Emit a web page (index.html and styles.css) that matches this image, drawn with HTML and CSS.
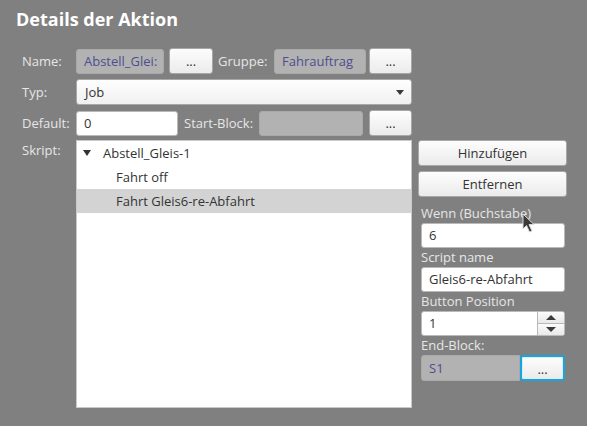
FILE: index.html
```html
<!DOCTYPE html>
<html lang="de">
<head>
<meta charset="utf-8">
<title>Details der Aktion</title>
<link rel="stylesheet" href="styles.css">
</head>
<body>
<div class="panel">
  <h1 class="title">Details der Aktion</h1>
  <div class="form">
    <div class="row">
      <span class="lbl lbl-main">Name:</span>
      <div class="field ro w88">Abstell_Glei:</div>
      <button class="btn w44 ml5">...</button>
      <span class="lbl lbl-grp">Gruppe:</span>
      <div class="field ro w92">Fahrauftrag</div>
      <button class="btn w43 ml3">...</button>
    </div>
    <div class="row">
      <span class="lbl lbl-main">Typ:</span>
      <div class="combo"><span>Job</span><span class="caret"></span></div>
    </div>
    <div class="row">
      <span class="lbl lbl-main">Default:</span>
      <div class="field w102">0</div>
      <span class="lbl lbl-start">Start-Block:</span>
      <div class="field ro w104"></div>
      <button class="btn w43 ml6">...</button>
    </div>
    <div class="main">
      <span class="lbl lbl-main">Skript:</span>
      <div class="tree">
        <div class="node root"><span class="tri"></span>Abstell_Gleis-1</div>
        <div class="node child">Fahrt off</div>
        <div class="node child sel">Fahrt Gleis6-re-Abfahrt</div>
      </div>
      <div class="side">
        <button class="btn wide">Hinzufügen</button>
        <button class="btn wide">Entfernen</button>
        <span class="lbl side-lbl first">Wenn (Buchstabe)</span>
        <div class="field sfield">6</div>
        <span class="lbl side-lbl">Script name</span>
        <div class="field sfield">Gleis6-re-Abfahrt</div>
        <span class="lbl side-lbl">Button Position</span>
        <div class="spinner">
          <span class="spin-val">1</span>
          <div class="spin-btns">
            <span class="spin-up"><i class="up"></i></span>
            <span class="spin-dn"><i class="dn"></i></span>
          </div>
        </div>
        <span class="lbl side-lbl">End-Block:</span>
        <div class="endrow">
          <div class="field ro w99">S1</div>
          <button class="btn focus w45">...</button>
        </div>
      </div>
    </div>
  </div>
  <svg class="cursor" width="14" height="21" viewBox="0 0 14 21">
    <path d="M1 1 L1 16 L4.5 12.5 L7.5 19 L10 18 L7 11.5 L12 11.5 Z" fill="#3a3a3a" stroke="#d8d8d8" stroke-width="1" stroke-linejoin="round"/>
  </svg>
</div>
</body>
</html>
```
FILE: styles.css
```css
body {
  margin: 0;
  background: #ffffff;
  font-family: "Open Sans", "DejaVu Sans", sans-serif;
  font-size: 13px;
}

.panel {
  width: 587px;
  height: 426px;
  background: #808080;
  position: relative;
  overflow: hidden;
}

.title {
  margin: 0;
  padding: 7px 0 0 16px;
  font-size: 18px;
  line-height: 24px;
  font-weight: 700;
  color: #ffffff;
}

.form {
  padding: 17px 0 0 22px;
  display: flex;
  flex-direction: column;
  gap: 5px;
}

.row {
  display: flex;
  align-items: center;
  height: 26px;
}

.lbl {
  color: #e6e6e6;
  line-height: 19px;
  white-space: nowrap;
}

.lbl-main { width: 54px; flex: none; }
.lbl-grp { width: 56px; margin-left: 5px; flex: none; }
.lbl-start { width: 75px; margin-left: 6px; flex: none; }

.field {
  box-sizing: border-box;
  height: 25px;
  line-height: 23px;
  padding: 0 7px;
  background: #ffffff;
  border: 1px solid #b9b9b9;
  border-radius: 3px;
  color: #333333;
  white-space: nowrap;
  overflow: hidden;
  flex: none;
}

.field.ro {
  background: #b2b2b2;
  border-color: #a9a9a9;
  color: #4e4e8e;
}

.w88 { width: 88px; }
.w92 { width: 92px; }
.w102 { width: 102px; }
.w104 { width: 104px; }
.w99 { width: 99px; }
.w44 { width: 44px; }
.w43 { width: 43px; }
.w45 { width: 45px; }
.ml3 { margin-left: 3px; }
.ml5 { margin-left: 5px; }
.ml6 { margin-left: 6px; }

.btn {
  box-sizing: border-box;
  height: 26px;
  padding: 0;
  font-family: inherit;
  font-size: 13px;
  color: #333333;
  background: linear-gradient(#fdfdfd, #ebebeb);
  border: 1px solid #a8a8a8;
  border-radius: 3px;
  flex: none;
  line-height: 24px;
}

.btn.focus {
  border: 2px solid #1aa3dc;
  box-shadow: inset 0 0 0 1px #d6eef8;
}

.combo {
  box-sizing: border-box;
  width: 336px;
  height: 26px;
  display: flex;
  align-items: center;
  justify-content: space-between;
  padding: 0 8px 0 8px;
  background: linear-gradient(#fefefe, #f0f0f0);
  border: 1px solid #a8a8a8;
  border-radius: 3px;
  color: #333333;
}

.caret {
  width: 0;
  height: 0;
  border-left: 4.5px solid transparent;
  border-right: 4.5px solid transparent;
  border-top: 5px solid #3a3a3a;
  margin-right: -1px;
}

.main {
  display: flex;
  align-items: flex-start;
  margin-top: -1px;
}

.main .lbl-main { margin-top: 1px; }

.tree {
  box-sizing: border-box;
  width: 336px;
  height: 268px;
  background: #ffffff;
  border: 1px solid #c9c9c9;
  flex: none;
}

.node {
  height: 24px;
  line-height: 24px;
  color: #333333;
  white-space: nowrap;
  display: flex;
  align-items: center;
}

.node.root { padding-left: 6px; }
.node.child { padding-left: 39px; }
.node.sel { background: #d3d3d3; }

.tri {
  width: 0;
  height: 0;
  border-left: 4px solid transparent;
  border-right: 4px solid transparent;
  border-top: 6px solid #333333;
  margin-right: 12px;
}

.side {
  width: 149px;
  margin-left: 6px;
  display: flex;
  flex-direction: column;
  flex: none;
}

.btn.wide {
  width: 149px;
  margin-bottom: 5px;
}

.btn.wide + .btn.wide { margin-bottom: 0; }

.side-lbl {
  margin-left: 3px;
  height: 19px;
}

.side-lbl.first { margin-top: 7px; }

.sfield {
  margin-left: 3px;
  width: 144px;
}

.spinner {
  box-sizing: border-box;
  margin-left: 3px;
  width: 144px;
  height: 25px;
  display: flex;
  background: #ffffff;
  border: 1px solid #b9b9b9;
  border-radius: 3px;
  overflow: hidden;
}

.spin-val {
  flex: 1;
  padding-left: 7px;
  line-height: 23px;
  color: #333333;
}

.spin-btns {
  width: 26px;
  display: flex;
  flex-direction: column;
  border-left: 1px solid #b9b9b9;
}

.spin-btns span {
  flex: 1;
  display: flex;
  align-items: center;
  justify-content: center;
  background: linear-gradient(#fbfbfb, #e9e9e9);
}

.spin-up { border-bottom: 1px solid #b9b9b9; }

.up, .dn {
  width: 0;
  height: 0;
  border-left: 5px solid transparent;
  border-right: 5px solid transparent;
}

.up { border-bottom: 5px solid #3a3a3a; }
.dn { border-top: 5px solid #3a3a3a; }

.endrow {
  display: flex;
  margin-left: 3px;
  height: 26px;
  align-items: stretch;
}

.endrow .field {
  height: 26px;
  line-height: 24px;
  border-radius: 3px 0 0 3px;
}

.cursor {
  position: absolute;
  left: 522px;
  top: 213px;
}
```
